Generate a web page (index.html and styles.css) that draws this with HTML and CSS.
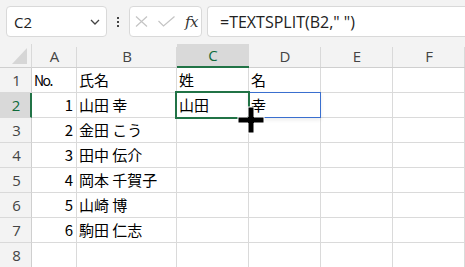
FILE: index.html
```html
<!DOCTYPE html>
<html lang="ja">
<head>
<meta charset="utf-8">
<link rel="stylesheet" href="styles.css">
</head>
<body>
<div class="app">
  <div class="toolbar">
    <div class="namebox">
      <span class="ref">C2</span>
      <svg class="chev" width="10" height="6" viewBox="0 0 10 6"><path d="M1 1 L5 5 L9 1" fill="none" stroke="#444" stroke-width="1.3"/></svg>
    </div>
    <div class="dots"><i></i><i></i><i></i></div>
    <div class="fxbox">
      <svg class="ico" width="13" height="11" viewBox="0 0 13 11"><path d="M1 0.5 L12 10.5 M12 0.5 L1 10.5" stroke="#c4c4c4" stroke-width="1.2" fill="none"/></svg>
      <svg class="ico" width="17" height="11" viewBox="0 0 17 11"><path d="M0.5 5 L5.5 10 L16.5 0.5" stroke="#c4c4c4" stroke-width="1.2" fill="none"/></svg>
      <span class="fx">fx</span>
    </div>
    <div class="formula">=TEXTSPLIT(B2," ")</div>
  </div>
  <div class="sheet">
    <div class="grid">
      <div class="hd corner"><svg width="15" height="16" viewBox="0 0 15 16"><path d="M15 0 L15 16 L0 16 Z" fill="#d6d6d6"/></svg></div>
      <div class="hd col">A</div>
      <div class="hd col">B</div>
      <div class="hd col sel">C</div>
      <div class="hd col">D</div>
      <div class="hd col">E</div>
      <div class="hd col">F</div>

      <div class="rh">1</div><div class="c"><span class="no">No.</span></div><div class="c">氏名</div><div class="c">姓</div><div class="c">名</div><div class="c"></div><div class="c"></div>
      <div class="rh rsel">2</div><div class="c n">1</div><div class="c">山田 幸</div><div class="c">山田</div><div class="c">幸</div><div class="c"></div><div class="c"></div>
      <div class="rh">3</div><div class="c n">2</div><div class="c">金田 こう</div><div class="c"></div><div class="c"></div><div class="c"></div><div class="c"></div>
      <div class="rh">4</div><div class="c n">3</div><div class="c">田中 伝介</div><div class="c"></div><div class="c"></div><div class="c"></div><div class="c"></div>
      <div class="rh">5</div><div class="c n">4</div><div class="c">岡本 千賀子</div><div class="c"></div><div class="c"></div><div class="c"></div><div class="c"></div>
      <div class="rh">6</div><div class="c n">5</div><div class="c">山崎 博</div><div class="c"></div><div class="c"></div><div class="c"></div><div class="c"></div>
      <div class="rh">7</div><div class="c n">6</div><div class="c">駒田 仁志</div><div class="c"></div><div class="c"></div><div class="c"></div><div class="c"></div>
      <div class="rh">8</div><div class="c"></div><div class="c"></div><div class="c"></div><div class="c"></div><div class="c"></div><div class="c"></div>
    </div>
    <div class="spill"></div>
    <div class="active"></div>
    <div class="handle"></div>
    <svg class="cursor" width="28" height="28" viewBox="0 0 28 28">
      <path d="M11 1 H17 V11 H27 V17 H17 V27 H11 V17 H1 V11 H11 Z" fill="#000" stroke="#fff" stroke-width="1"/>
    </svg>
  </div>
</div>
</body>
</html>
```

FILE: styles.css
```css
html, body {
  margin: 0;
  padding: 0;
}
body {
  background: #f3f3f3;
  width: 465px;
  height: 267px;
  overflow: hidden;
}
.app {
  width: 465px;
  height: 267px;
  overflow: hidden;
}
.toolbar {
  height: 44px;
  box-sizing: border-box;
  padding: 6px 0 0 6px;
  display: flex;
  align-items: flex-start;
}
.namebox {
  width: 101px;
  height: 31px;
  box-sizing: border-box;
  border: 1px solid #d9d9d9;
  border-radius: 4px;
  background: #fff;
  display: flex;
  align-items: center;
  justify-content: space-between;
  padding: 0 6px 0 7px;
  font-family: "Open Sans", "Noto Sans", sans-serif;
  font-size: 15px;
  color: #222;
}
.chev { margin-top: 1px; }
.dots {
  width: 22px;
  height: 31px;
  display: flex;
  flex-direction: column;
  align-items: center;
  justify-content: center;
  gap: 2px;
}
.dots i {
  display: block;
  width: 2px;
  height: 2px;
  background: #444;
}
.fxbox {
  width: 73px;
  height: 31px;
  box-sizing: border-box;
  border: 1px solid #d9d9d9;
  border-radius: 4px;
  background: #fff;
  display: flex;
  align-items: center;
  padding: 0 0 0 5px;
  gap: 10px;
  margin-right: 5px;
}
.fx {
  font-family: "DejaVu Serif", "Liberation Serif", serif;
  font-style: italic;
  font-size: 15px;
  color: #333;
  letter-spacing: -0.5px;
}
.formula {
  flex: 1;
  height: 31px;
  box-sizing: border-box;
  border: 1px solid #d9d9d9;
  border-right: none;
  border-radius: 4px 0 0 4px;
  background: #fff;
  display: flex;
  align-items: center;
  padding-left: 12px;
  font-family: "Open Sans", "Noto Sans", sans-serif;
  font-size: 16px;
  color: #222;
  white-space: nowrap;
}
.sheet {
  position: relative;
}
.grid {
  display: grid;
  grid-template-columns: 32px 45px 100px 72px 72px 72px 72px;
  grid-template-rows: 24px repeat(8, 25px);
}
.hd {
  box-sizing: border-box;
  border-bottom: 1px solid #cfcfcf;
  display: flex;
  align-items: center;
  justify-content: center;
  font-family: "Open Sans", "Noto Sans", sans-serif;
  font-size: 15px;
  color: #444;
  position: relative;
}
.hd.col::after {
  content: "";
  position: absolute;
  right: 0;
  top: 3px;
  bottom: 0;
  width: 1px;
  background: #d9d9d9;
}
.corner {
  border-right: 1px solid #d9d9d9;
  align-items: flex-end;
  justify-content: flex-end;
  padding: 0 4px 3px 0;
}
.hd.sel {
  background: #d9d9d9;
  color: #0f6b3b;
  border-bottom: 2px solid #217346;
}
.rh {
  box-sizing: border-box;
  border-right: 1px solid #cfcfcf;
  border-bottom: 1px solid #d9d9d9;
  display: flex;
  align-items: center;
  justify-content: center;
  font-family: "Open Sans", "Noto Sans", sans-serif;
  font-size: 15px;
  color: #444;
  padding-left: 2px;
}
.rh.rsel {
  background: #d9d9d9;
  color: #0f6b3b;
  border-right: 2px solid #217346;
}
.c {
  box-sizing: border-box;
  background: #fff;
  border-right: 1px solid #dadada;
  border-bottom: 1px solid #dadada;
  font-family: "Noto Sans CJK JP", "Noto Sans", sans-serif;
  font-size: 15px;
  line-height: 24px;
  color: #000;
  padding: 0 3px 0 2px;
  white-space: nowrap;
  overflow: hidden;
}
.c.n {
  text-align: right;
}
.no {
  font-size: 14px;
  letter-spacing: -1.5px;
}
.active {
  position: absolute;
  left: 175px;
  top: 47px;
  width: 75px;
  height: 28px;
  box-sizing: border-box;
  border: 2px solid #217346;
}
.spill {
  position: absolute;
  left: 248px;
  top: 48px;
  width: 73px;
  height: 26px;
  box-sizing: border-box;
  border: 1px solid #3a6fcf;
  box-shadow: 0 2px 4px rgba(0,0,0,0.08);
}
.handle {
  position: absolute;
  left: 246px;
  top: 71px;
  width: 5px;
  height: 5px;
  background: #217346;
  border: 1px solid #fff;
}
.cursor {
  position: absolute;
  left: 237px;
  top: 62px;
}
```
